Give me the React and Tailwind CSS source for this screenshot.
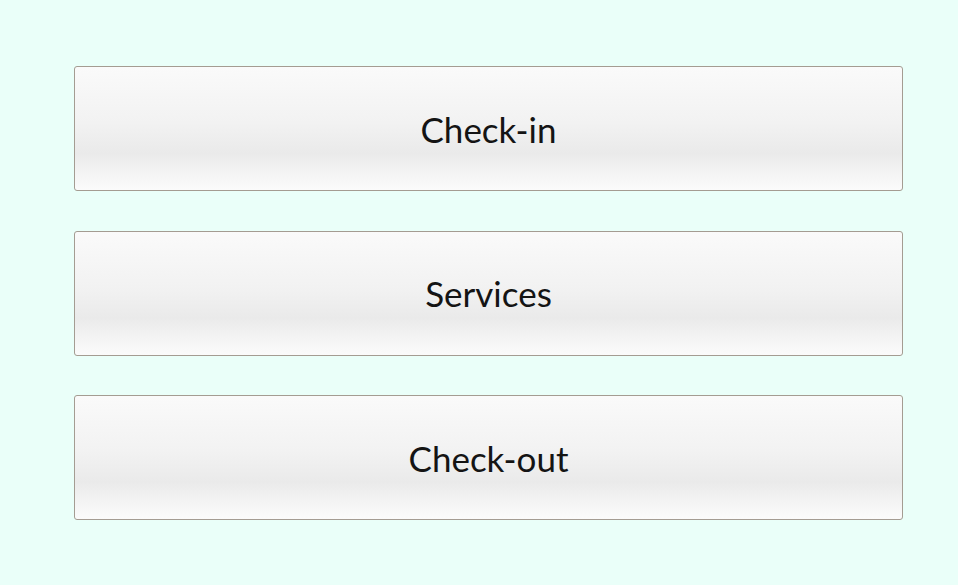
export default function App() {
  const items = ["Check-in", "Services", "Check-out"];
  return (
    <div className="min-h-[585px] w-full bg-[#eafff9] pt-[66px]" style={{ fontFamily: "Lato, sans-serif" }}>
      <div className="ml-[74px] flex w-[829px] flex-col gap-[39.5px]">
        {items.map((t) => (
          <button
            key={t}
            className="flex h-[125px] w-full items-center justify-center rounded-[3px] border border-[#a49c92] bg-[linear-gradient(to_bottom,#fafafa_0%,#f2f2f2_45%,#eaeaea_70%,#f3f3f3_85%,#fbfbfb_100%)] pt-[1px] text-[35px] leading-none text-[#141414]"
          >
            {t}
          </button>
        ))}
      </div>
    </div>
  );
}
